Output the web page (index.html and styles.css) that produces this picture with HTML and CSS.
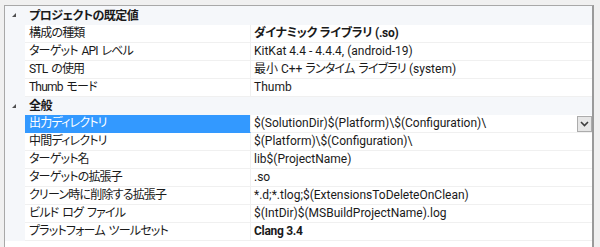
FILE: index.html
```html
<!DOCTYPE html>
<html lang="ja">
<head>
    <meta charset="UTF-8">
    <title>プロパティ</title>
    <link rel="stylesheet" href="styles.css">
</head>
<body>
    <div class="frame">
        <div class="cat cat-first">
            <span class="gutter"><span class="tri"></span></span>
            <span class="cat-label">プロジェクトの既定値</span>
        </div>
        <div class="row">
            <span class="gutter"></span>
            <div class="name">構成の種類</div>
            <div class="val bold">ダイナミック ライブラリ (.so)</div>
        </div>
        <div class="row">
            <span class="gutter"></span>
            <div class="name">ターゲット API レベル</div>
            <div class="val">KitKat 4.4 - 4.4.4, (android-19)</div>
        </div>
        <div class="row">
            <span class="gutter"></span>
            <div class="name">STL の使用</div>
            <div class="val">最小 C++ <span class="kana">ランタイム ライブラリ</span> (system)</div>
        </div>
        <div class="row">
            <span class="gutter"></span>
            <div class="name">Thumb モード</div>
            <div class="val">Thumb</div>
        </div>

        <div class="cat">
            <span class="gutter"><span class="tri"></span></span>
            <span class="cat-label">全般</span>
        </div>
        <div class="row selected">
            <span class="gutter"></span>
            <div class="name">出力ディレクトリ</div>
            <div class="val">
                <span class="val-text">$(SolutionDir)$(Platform)\$(Configuration)\</span>
                <span class="drop">
                    <svg width="9" height="6" viewBox="0 0 9 6"><path d="M1 1 L4.5 4.5 L8 1" fill="none" stroke="#3c3c3c" stroke-width="1.6"/></svg>
                </span>
            </div>
        </div>
        <div class="row">
            <span class="gutter"></span>
            <div class="name">中間ディレクトリ</div>
            <div class="val">$(Platform)\$(Configuration)\</div>
        </div>
        <div class="row">
            <span class="gutter"></span>
            <div class="name">ターゲット名</div>
            <div class="val">lib$(ProjectName)</div>
        </div>
        <div class="row">
            <span class="gutter"></span>
            <div class="name">ターゲットの拡張子</div>
            <div class="val">.so</div>
        </div>
        <div class="row">
            <span class="gutter"></span>
            <div class="name">クリーン時に削除する拡張子</div>
            <div class="val">*.d;*.tlog;$(ExtensionsToDeleteOnClean)</div>
        </div>
        <div class="row">
            <span class="gutter"></span>
            <div class="name">ビルド ログ ファイル</div>
            <div class="val">$(IntDir)$(MSBuildProjectName).log</div>
        </div>
        <div class="row">
            <span class="gutter"></span>
            <div class="name">プラットフォーム ツールセット</div>
            <div class="val bold">Clang 3.4</div>
        </div>
    </div>
</body>
</html>
```

FILE: styles.css
```css
body {
    margin: 0;
    background: #f0f0f0;
    font-family: Roboto, "Noto Sans CJK JP", sans-serif;
    font-size: 12px;
    font-feature-settings: "palt";
    color: #1a1a1a;
    overflow: hidden;
}

.frame {
    box-sizing: border-box;
    width: 590px;
    height: 242px;
    margin: 5px 0 0 4px;
    background: white;
    border: 1px solid #a8a8a8;
    border-right: 2px solid #9a9a9a;
    border-bottom: none;
}

.gutter {
    width: 20px;
    flex: none;
    background: #f5f7fa;
    position: relative;
}

.cat {
    display: flex;
    height: 18px;
    background: #f5f7fa;
    align-items: center;
    font-weight: bold;
}

.cat-first {
    height: 19px;
}

.cat .gutter {
    height: 100%;
}

.tri {
    position: absolute;
    left: 7px;
    top: 7px;
    width: 0;
    height: 0;
    border-right: 4px solid #505050;
    border-top: 4px solid transparent;
}

.cat-label {
    padding-left: 4px;
    line-height: 18px;
    letter-spacing: -0.5px;
}

.row {
    display: flex;
    height: 18px;
}

.name {
    box-sizing: border-box;
    width: 226px;
    padding-left: 4px;
    border-right: 1px solid #f0f0f0;
    border-bottom: 1px solid #f0f0f0;
    line-height: 17px;
    white-space: pre;
    letter-spacing: -0.8px;
    word-spacing: 1.6px;
}

.val {
    flex: 1;
    display: flex;
    align-items: center;
    padding-left: 3px;
    border-bottom: 1px solid #f0f0f0;
    line-height: 17px;
    white-space: pre;
}

.kana {
    letter-spacing: -0.8px;
    word-spacing: 1.6px;
}

.val-text {
    flex: 1;
}

.bold {
    font-weight: bold;
    letter-spacing: -0.3px;
}

.selected .name {
    background: #3399ff;
    color: white;
    border-bottom-color: #3399ff;
}

.drop {
    box-sizing: border-box;
    width: 15px;
    height: 16px;
    margin-top: 1px;
    display: flex;
    align-items: center;
    justify-content: center;
    background: #e6e6e6;
    border: 1px solid #acacac;
}
```
